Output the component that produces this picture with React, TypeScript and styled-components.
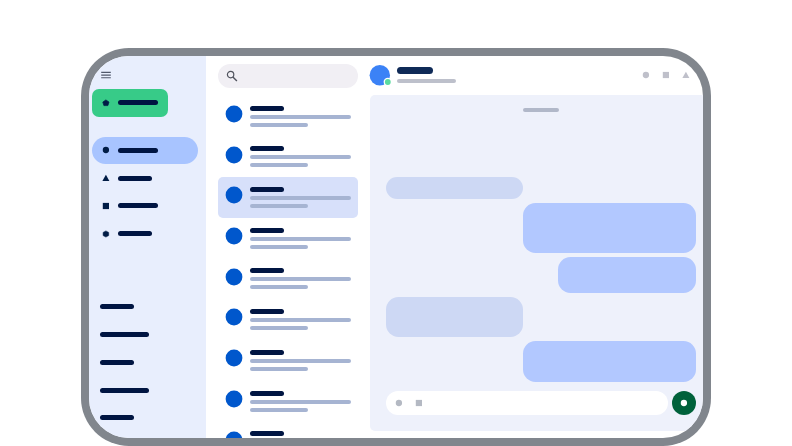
import React from 'react';
import styled, { createGlobalStyle } from 'styled-components';

const GlobalStyle = createGlobalStyle`
  * { box-sizing: border-box; }
  body { margin: 0; background: #fff; font-family: Roboto, sans-serif; overflow: hidden; }
`;

const Page = styled.main`
  height: 446px;
  padding: 48px 81px 0;
  overflow: hidden;
`;

const Device = styled.div`
  width: 630px;
  height: 398px;
  border-radius: 48px;
  background: #81868d;
  padding: 8px;
`;

const Screen = styled.div`
  display: grid;
  grid-template-columns: 117px 164px 1fr;
  width: 614px;
  height: 382px;
  border-radius: 40px;
  background: #fff;
  overflow: hidden;
`;

const Line = styled.span<{ $w: number; $h?: number; $color?: string }>`
  display: block;
  flex: none;
  width: ${(p) => p.$w}px;
  height: ${(p) => p.$h ?? 5}px;
  border-radius: 4px;
  background: ${(p) => p.$color ?? '#001542'};
`;

const Sidebar = styled.aside`
  display: flex;
  flex-direction: column;
  align-items: flex-start;
  background: #e8eefd;
  padding-left: 3px;
  height: 382px;
  overflow: hidden;
`;

const MenuIcon = styled.svg`
  flex: none;
  width: 10px;
  height: 8px;
  margin: 15px 0 10px 9px;
`;

const NavItem = styled.div<{ $w?: number; $bg?: string; $radius?: number }>`
  display: flex;
  flex: none;
  align-items: center;
  gap: 8px;
  width: ${(p) => p.$w ?? 106}px;
  height: 27.75px;
  padding-left: 10px;
  border-radius: ${(p) => p.$radius ?? 14}px;
  background: ${(p) => p.$bg ?? 'transparent'};
`;

const Nav = styled.nav`
  margin-top: 19.8px;
`;

const Links = styled.div`
  display: flex;
  flex-direction: column;
  gap: 22.75px;
  margin: 56.8px 0 0 8px;
`;

const Glyph = styled.svg`
  display: block;
  flex: none;
  width: 8px;
  height: 8px;
`;

const ListColumn = styled.section`
  height: 382px;
  padding: 8px 12px 0;
  overflow: hidden;
`;

const Search = styled.div`
  display: flex;
  align-items: center;
  height: 24px;
  margin-bottom: 7.5px;
  padding-left: 8px;
  border-radius: 12px;
  background: #f1eff4;
`;

const SearchIcon = styled.svg`
  width: 12px;
  height: 12px;
`;

const Conversation = styled.div<{ $selected: boolean }>`
  display: flex;
  gap: 7px;
  height: 40.7px;
  padding: 9.5px 0 0 7px;
  border-radius: 5px;
  background: ${(p) => (p.$selected ? '#d7e0fa' : 'transparent')};
`;

const Avatar = styled.svg`
  flex: none;
  width: 18px;
  height: 18px;
`;

const Preview = styled.div`
  display: flex;
  flex-direction: column;
  gap: 4px;
  padding-top: 0.7px;
`;

const Chat = styled.section`
  height: 382px;
`;

const ChatHeader = styled.header`
  display: flex;
  align-items: flex-start;
  height: 39px;
`;

const Contact = styled.svg`
  flex: none;
  width: 24px;
  height: 22px;
  margin-top: 9px;
  overflow: visible;
`;

const ContactLines = styled.div`
  display: flex;
  flex-direction: column;
  gap: 5px;
  margin: 11.3px 0 0 3.4px;
`;

const HeaderActions = styled.div`
  display: flex;
  gap: 12px;
  margin: 15px 13px 0 auto;
`;

const ChatPanel = styled.div`
  display: flex;
  flex-direction: column;
  height: 335.7px;
  padding: 13px 7.3px 15.7px 15.7px;
  border-radius: 5px 0 0 5px;
  background: #eef1fb;
`;

const DateMark = styled(Line)`
  margin-left: 137.2px;
`;

const Messages = styled.div`
  display: flex;
  flex-direction: column;
  gap: 4.1px;
  margin: auto 0 9px;
`;

const Bubble = styled.div<{ $w: number; $h: number; $mine?: boolean }>`
  align-self: ${(p) => (p.$mine ? 'flex-end' : 'flex-start')};
  width: ${(p) => p.$w}px;
  height: ${(p) => p.$h}px;
  border-radius: 12.5px;
  background: ${(p) => (p.$mine ? '#b2c8ff' : '#cdd8f4')};
`;

const Composer = styled.div`
  display: flex;
  gap: 4px;
  height: 24px;
`;

const Input = styled.div`
  display: flex;
  flex: 1;
  align-items: center;
  gap: 12px;
  padding-left: 9.7px;
  border-radius: 12px;
  background: #fff;
`;

const Send = styled.div`
  display: grid;
  place-items: center;
  width: 24px;
  border-radius: 50%;
  background: #00613b;
`;

type ShapeKind = 'pentagon' | 'circle' | 'triangle' | 'square' | 'hexagon';

function Shape({ kind, color = '#001c46' }: { kind: ShapeKind; color?: string }) {
  return (
    <Glyph viewBox="0 0 8 8" fill={color} aria-hidden="true">
      {kind === 'circle' && <circle cx="3.9" cy="4" r="3.15" />}
      {kind === 'square' && <rect x=".8" y=".9" width="6.2" height="6.2" />}
      {kind === 'triangle' && <path d="M3.9 .8 7.4 7.1H.4Z" />}
      {kind === 'pentagon' && (
        <path d="M3.9 .9 7 3.1 5.9 6.6H1.9L.8 3.1Z" stroke={color} strokeWidth=".7" strokeLinejoin="round" />
      )}
      {kind === 'hexagon' && (
        <path d="M3.9 .9 6.7 2.4v3.2L3.9 7.1 1.1 5.6V2.4Z" stroke={color} strokeWidth=".5" strokeLinejoin="round" />
      )}
    </Glyph>
  );
}

const navItems: { kind: ShapeKind; width: number }[] = [
  { kind: 'circle', width: 40 },
  { kind: 'triangle', width: 34 },
  { kind: 'square', width: 40 },
  { kind: 'hexagon', width: 34 },
];

const links = [33.7, 49, 33.7, 49, 33.7];

export default function App() {
  return (
    <>
      <GlobalStyle />
      <Page>
        <Device>
          <Screen>
            <Sidebar>
              <MenuIcon viewBox="0 0 10 8" stroke="#50586b" strokeWidth="1.1">
                <path d="M.2 1.4h9.6M.2 4.1h9.6M.2 6.8h9.6" />
              </MenuIcon>
              <NavItem $w={76.4} $bg="#37cb88" $radius={7}>
                <Shape kind="pentagon" />
                <Line $w={40} />
              </NavItem>
              <Nav>
                {navItems.map((item, i) => (
                  <NavItem key={item.kind} $bg={i === 0 ? '#a8c4ff' : undefined}>
                    <Shape kind={item.kind} />
                    <Line $w={item.width} />
                  </NavItem>
                ))}
              </Nav>
              <Links>
                {links.map((w, i) => (
                  <Line key={i} $w={w} />
                ))}
              </Links>
            </Sidebar>

            <ListColumn>
              <Search>
                <SearchIcon viewBox="0 0 12 12" fill="none" stroke="#51545e" strokeWidth="1.2">
                  <circle cx="4.6" cy="4.6" r="3.2" />
                  <path d="m6.9 6.9 4 4" strokeWidth="1.4" />
                </SearchIcon>
              </Search>
              {Array.from({ length: 9 }, (_, i) => (
                <Conversation key={i} $selected={i === 2}>
                  <Avatar viewBox="0 0 18 18">
                    <circle cx="9" cy="9" r="8.4" fill="#0057cc" />
                  </Avatar>
                  <Preview>
                    <Line $w={34} />
                    <Line $w={101} $h={4} $color="#a6b4d2" />
                    <Line $w={57.8} $h={4} $color="#a6b4d2" />
                  </Preview>
                </Conversation>
              ))}
            </ListColumn>

            <Chat>
              <ChatHeader>
                <Contact viewBox="0 0 24 22">
                  <circle cx="9.8" cy="10.3" r="10.2" fill="#3b82f6" />
                  <circle cx="17.8" cy="17" r="4.2" fill="#fff" />
                  <circle cx="17.8" cy="17" r="2.9" fill="#5adba0" />
                </Contact>
                <ContactLines>
                  <Line $w={36} $h={7} $color="#0f2a57" />
                  <Line $w={58.5} $h={4} $color="#bdc0cb" />
                </ContactLines>
                <HeaderActions>
                  <Shape kind="circle" color="#bfc0ca" />
                  <Shape kind="square" color="#bfc0ca" />
                  <Shape kind="triangle" color="#bfc0ca" />
                </HeaderActions>
              </ChatHeader>
              <ChatPanel>
                <DateMark $w={36} $h={4} $color="#b1b8c9" />
                <Messages>
                  <Bubble $w={137.3} $h={22.2} />
                  <Bubble $w={172.8} $h={50} $mine />
                  <Bubble $w={138} $h={35.6} $mine />
                  <Bubble $w={137.3} $h={40.3} />
                  <Bubble $w={172.8} $h={41} $mine />
                </Messages>
                <Composer>
                  <Input>
                    <Shape kind="circle" color="#b4b9c3" />
                    <Shape kind="square" color="#b4b9c3" />
                  </Input>
                  <Send>
                    <Shape kind="circle" color="#fff" />
                  </Send>
                </Composer>
              </ChatPanel>
            </Chat>
          </Screen>
        </Device>
      </Page>
    </>
  );
}
